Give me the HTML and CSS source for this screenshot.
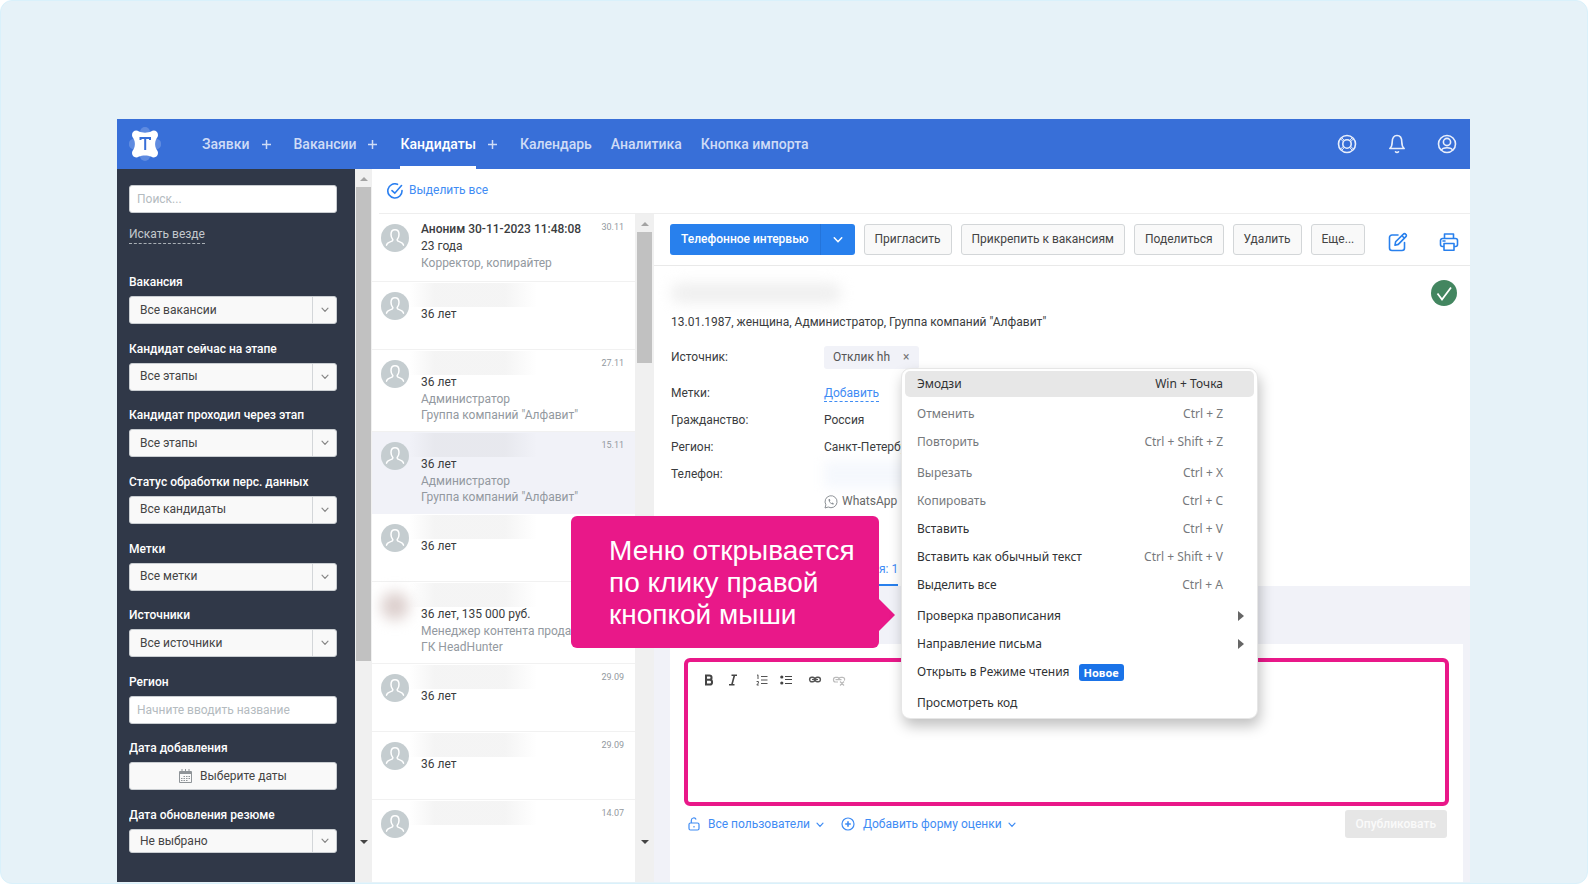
FILE: index.html
```html
<!DOCTYPE html>
<html lang="ru">
<head>
<meta charset="utf-8">
<title>Кандидаты</title>
<link rel="stylesheet" href="styles.css">
</head>
<body>
<svg class="defs" aria-hidden="true">
  <symbol id="avatar" viewBox="0 0 28 28"><circle cx="14" cy="14" r="14" fill="#c5cdd0"/><path d="M5.500 21.200c.3-2 1.800-2.700 3.700-3.300 1.700-.5 2.700-.8 2.700-1.900 0-.8-1.900-2.300-1.900-5.600C10 7.300 11.600 5.700 14 5.700s4 1.600 4 4.700c0 3.300-1.900 4.800-1.900 5.600 0 1.100 1 1.400 2.700 1.900 1.900.6 3.400 1.300 3.700 3.300" fill="none" stroke="#fff" stroke-width="1.500" stroke-linecap="round"/></symbol>
  <symbol id="chevron" viewBox="0 0 8 6"><path d="M1 1.200 4 4.400 7 1.200" fill="none" stroke="currentColor" stroke-width="1.200" stroke-linecap="round"/></symbol>
</svg>
<main class="frame">
  <div class="app">
    <header class="header">
      <a class="logo" href="#" aria-label="Главная"><svg viewBox="0 0 32 34" width="32" height="34"><g fill="#5f8be0"><circle cx="16" cy="5" r="5"/><circle cx="16" cy="29" r="5"/><circle cx="5" cy="17" r="5.200"/><circle cx="27" cy="17" r="5.200"/></g><path d="M3 8c0-4 4-5.500 7-3.500 3 1.500 9 1.500 12 0C25 2.500 29 4 29 8c0 2-1 2.500-2 4.500-1.200 3-1.200 6 0 9 1 2 2 2.500 2 4.500 0 4-4 5.500-7 3.500-3-1.500-9-1.500-12 0C7 31.500 3 30 3 26c0-2 1-2.500 2-4.500 1.200-3 1.200-6 0-9C4 10.500 3 10 3 8z" fill="#fff"/><path d="M11.500 13v-2h9.500v2M16.200 11v12" fill="none" stroke="#386fd8" stroke-width="2"/></svg></a>
      <nav class="nav">
        <span class="nav-item"><a href="#">Заявки</a><button type="button" aria-label="Добавить заявку"><svg viewBox="0 0 9 9" width="9" height="9"><path d="M4.500 0v9M0 4.500h9"/></svg></button></span>
        <span class="nav-item"><a href="#">Вакансии</a><button type="button" aria-label="Добавить вакансию"><svg viewBox="0 0 9 9" width="9" height="9"><path d="M4.500 0v9M0 4.500h9"/></svg></button></span>
        <span class="nav-item active"><a href="#">Кандидаты</a><button type="button" aria-label="Добавить кандидата"><svg viewBox="0 0 9 9" width="9" height="9"><path d="M4.500 0v9M0 4.500h9"/></svg></button></span>
        <span class="nav-item"><a href="#">Календарь</a></span>
        <span class="nav-item"><a href="#">Аналитика</a></span>
        <span class="nav-item"><a href="#">Кнопка импорта</a></span>
      </nav>
      <div class="header-icons">
        <button type="button" aria-label="Помощь"><svg viewBox="0 0 20 20" width="20" height="20"><circle cx="10" cy="10" r="8.500"/><circle cx="10" cy="10" r="4.200"/><path d="M4.500 3.500l3 3.200M3.500 4.800l3 3M15.500 3.500l-3 3.200M16.500 4.800l-3 3M4.500 16.500l3-3.200M3.500 15.200l3-3M15.500 16.500l-3-3.200M16.500 15.200l-3-3" stroke-width="1"/></svg></button>
        <button type="button" aria-label="Уведомления"><svg viewBox="0 0 20 20" width="20" height="20"><path d="M2.800 14.500c1.800-1.500 2.400-3 2.400-6.500 0-4 1.800-6.500 4.800-6.500s4.800 2.500 4.800 6.500c0 3.500.6 5 2.400 6.500zM8.500 17.800c.8.900 2.200.9 3 0"/></svg></button>
        <button type="button" aria-label="Профиль"><svg viewBox="0 0 20 20" width="20" height="20"><circle cx="10" cy="10" r="8.500"/><circle cx="10" cy="8" r="3.600"/><path d="M4.500 16.200c.8-2.200 2.500-2.400 5.500-2.400s4.700.2 5.500 2.400"/></svg></button>
      </div>
    </header>

    <div class="body">
      <aside class="sidebar">
        <input class="text-input" type="text" placeholder="Поиск..." aria-label="Поиск">
        <a class="everywhere" href="#">Искать везде</a>
        <form class="fields">
          <div class="field"><label for="f1">Вакансия</label><div class="select"><select id="f1"><option>Все вакансии</option></select><span class="caret"><svg width="8" height="6"><use href="#chevron"/></svg></span></div></div>
          <div class="field"><label for="f2">Кандидат сейчас на этапе</label><div class="select"><select id="f2"><option>Все этапы</option></select><span class="caret"><svg width="8" height="6"><use href="#chevron"/></svg></span></div></div>
          <div class="field"><label for="f3">Кандидат проходил через этап</label><div class="select"><select id="f3"><option>Все этапы</option></select><span class="caret"><svg width="8" height="6"><use href="#chevron"/></svg></span></div></div>
          <div class="field"><label for="f4">Статус обработки перс. данных</label><div class="select"><select id="f4"><option>Все кандидаты</option></select><span class="caret"><svg width="8" height="6"><use href="#chevron"/></svg></span></div></div>
          <div class="field"><label for="f5">Метки</label><div class="select"><select id="f5"><option>Все метки</option></select><span class="caret"><svg width="8" height="6"><use href="#chevron"/></svg></span></div></div>
          <div class="field"><label for="f6">Источники</label><div class="select"><select id="f6"><option>Все источники</option></select><span class="caret"><svg width="8" height="6"><use href="#chevron"/></svg></span></div></div>
          <div class="field"><label for="f7">Регион</label><input class="text-input" id="f7" type="text" placeholder="Начните вводить название"></div>
          <div class="field"><label for="f8">Дата добавления</label><button class="date-btn" id="f8" type="button"><svg viewBox="0 0 13 14" width="13" height="14"><path d="M.5 2.500h12v11H.5zM3 0v3.500M6.500 0v3.500M10 0v3.500" fill="none" stroke="#8f9498"/><path d="M.5 3h12v2H.5z" fill="#8f9498"/><path d="M4.500 7.500h7M2 9.500h9.500M2 11.500h7" stroke="#8f9498" stroke-width="1.200" stroke-dasharray="1.500 1"/></svg>Выберите даты</button></div>
          <div class="field"><label for="f9">Дата обновления резюме</label><div class="select"><select id="f9"><option>Не выбрано</option></select><span class="caret"><svg width="8" height="6"><use href="#chevron"/></svg></span></div></div>
        </form>
      </aside>
      <div class="scroll scroll-side"><i class="up"></i><i class="thumb"></i><i class="down"></i></div>

      <div class="workspace">
        <div class="select-all"><a href="#"><svg viewBox="0 0 16 16" width="16" height="16"><path d="M10.500 1.300A7.100 7.100 0 1 0 15 7.500M5 7.600l2.800 2.600L14.500 2.500" fill="none" stroke="#2a7ff0" stroke-width="1.600" stroke-linecap="round"/></svg>Выделить все</a></div>
        <div class="columns">
          <ul class="list">
            <li><svg class="ava" width="28" height="28"><use href="#avatar"/></svg><div class="person"><b>Аноним 30-11-2023 11:48:08</b><span>23 года</span><small>Корректор, копирайтер</small></div><time>30.11</time></li>
            <li><svg class="ava" width="28" height="28"><use href="#avatar"/></svg><div class="person"><i class="veil"></i><span>36 лет</span></div></li>
            <li><svg class="ava" width="28" height="28"><use href="#avatar"/></svg><div class="person"><i class="veil"></i><span>36 лет</span><small>Администратор</small><small>Группа компаний "Алфавит"</small></div><time>27.11</time></li>
            <li class="current"><svg class="ava" width="28" height="28"><use href="#avatar"/></svg><div class="person"><i class="veil"></i><span>36 лет</span><small>Администратор</small><small>Группа компаний "Алфавит"</small></div><time>15.11</time></li>
            <li><svg class="ava" width="28" height="28"><use href="#avatar"/></svg><div class="person"><i class="veil"></i><span>36 лет</span></div></li>
            <li><div class="ava photo"></div><div class="person"><i class="veil"></i><span>36 лет, 135 000 руб.</span><small>Менеджер контента продаж</small><small>ГК HeadHunter</small></div></li>
            <li><svg class="ava" width="28" height="28"><use href="#avatar"/></svg><div class="person"><i class="veil"></i><span>36 лет</span></div><time>29.09</time></li>
            <li><svg class="ava" width="28" height="28"><use href="#avatar"/></svg><div class="person"><i class="veil"></i><span>36 лет</span></div><time>29.09</time></li>
            <li><svg class="ava" width="28" height="28"><use href="#avatar"/></svg><div class="person"><i class="veil"></i></div><time>14.07</time></li>
          </ul>
          <div class="scroll scroll-list"><i class="up"></i><i class="thumb"></i><i class="down"></i></div>

          <section class="details">
            <div class="toolbar">
              <div class="split"><button type="button">Телефонное интервью</button><button type="button" aria-label="Другие этапы"><svg width="10" height="8"><use href="#chevron"/></svg></button></div>
              <button class="btn" type="button">Пригласить</button>
              <button class="btn" type="button">Прикрепить к вакансиям</button>
              <button class="btn" type="button">Поделиться</button>
              <button class="btn" type="button">Удалить</button>
              <button class="btn" type="button">Еще...</button>
              <div class="tools">
                <button type="button" aria-label="Редактировать"><svg viewBox="0 0 20 20" width="20" height="20"><path d="M10 3H4a2.500 2.500 0 0 0-2.500 2.500V16A2.500 2.500 0 0 0 4 18.500h10a2.500 2.500 0 0 0 2.500-2.500v-5.500M7 13.200l.6-3.400 7.800-7.700a1.500 1.500 0 0 1 2.200 0l.3.300a1.500 1.500 0 0 1 0 2.200l-7.600 7.800zM14 3.800l2.500 2.500"/></svg></button>
                <button type="button" aria-label="Печать"><svg viewBox="0 0 20 20" width="20" height="20"><path d="M5.500 6.500V2h9v4.500M5 14.500H3.500A2 2 0 0 1 1.500 12.500v-4a2 2 0 0 1 2-2h13a2 2 0 0 1 2 2v4a2 2 0 0 1-2 2H15M5 11.500h10v6.700H5zM4 9h2"/></svg></button>
              </div>
            </div>
            <div class="profile">
              <div class="profile-name"><i class="name-veil"></i><svg viewBox="0 0 26 26" width="26" height="26"><circle cx="13" cy="13" r="13" fill="#438660"/><path d="M6.500 13.500 11 19.500 20 7.500" fill="none" stroke="#fff" stroke-width="1.800"/></svg></div>
              <p class="summary">13.01.1987, женщина, Администратор, Группа компаний "Алфавит"</p>
              <dl class="facts">
                <dt class="source">Источник:</dt><dd class="source"><span class="chip">Отклик hh<button type="button" aria-label="Убрать источник">×</button></span></dd>
                <dt>Метки:</dt><dd><a class="dashed" href="#">Добавить</a></dd>
                <dt>Гражданство:</dt><dd>Россия</dd>
                <dt>Регион:</dt><dd>Санкт-Петербург</dd>
                <dt>Телефон:</dt><dd><i class="phone-veil"></i></dd>
                <dd class="wa"><svg viewBox="0 0 14 14" width="14" height="14"><path d="M1 13l.9-3.200A6 6 0 1 1 4.200 12z" fill="none" stroke="#8a8f94"/><path d="M4.800 4c-1.300 2 2.700 6.400 5 5.200l-.2-1-1.400-.6-.7.600C6.400 7.700 6 7 5.800 6.300l.6-.7L5.800 4z" fill="#8a8f94"/></svg>WhatsApp</dd>
              </dl>
              <nav class="tabs"><a href="#">я: 1</a></nav>
            </div>
            <div class="comments">
              <div class="composer">
                <div class="editor">
                  <div class="format">
                    <button type="button" aria-label="Полужирный"><svg viewBox="0 0 10 12" width="10" height="12"><path d="M2 1.500h3.300c3 0 3 4.300 0 4.300H2zM2 5.800h3.800c3 0 3 4.700 0 4.700H2zM2 1v10" fill="none" stroke="#444" stroke-width="2"/></svg></button>
                    <button type="button" aria-label="Курсив"><svg viewBox="0 0 10 12" width="10" height="12"><path d="M3.500 1.200H9M1 10.800h5.500M6.500 1 3.800 11" fill="none" stroke="#444" stroke-width="1.600"/></svg></button>
                    <button class="gap" type="button" aria-label="Нумерованный список"><svg viewBox="0 0 12 12" width="12" height="12"><path d="M5 2.500h6.500M5 6h6.500M5 9.500h6.500M1 1.500l1-.7V5M.6 7.500h1.800V9L.8 11h2" fill="none" stroke="#555"/></svg></button>
                    <button type="button" aria-label="Маркированный список"><svg viewBox="0 0 12 12" width="12" height="12"><path d="M5 2.500h7M5 5.500h7M5 9.500h7" fill="none" stroke="#444"/><circle cx="1.800" cy="3" r="1.600" fill="#444"/><circle cx="1.800" cy="9" r="1.600" fill="#444"/></svg></button>
                    <button class="gap" type="button" aria-label="Ссылка"><svg viewBox="0 0 14 12" width="14" height="12"><rect x="1.600" y="3.200" width="5.200" height="4.600" rx="2.200" fill="none" stroke="#555" stroke-width="1.400"/><rect x="7.200" y="3.200" width="5.200" height="4.600" rx="2.200" fill="none" stroke="#555" stroke-width="1.400"/><path d="M4 5.500h6" stroke="#555" stroke-width="1.200"/></svg></button>
                    <button type="button" aria-label="Убрать ссылку" disabled><svg viewBox="0 0 14 12" width="14" height="12"><path d="M6 8H3.500C.8 8 .8 3.400 3.500 3.400h2C7 3.400 7 5 7 5.600M7 5c0-1 .8-1.600 2-1.600h1.500C13 3.400 13 6 12 6.500M3.500 5.700h6M8 7.500l4 4M12 7.500l-4 4" fill="none" stroke="#bbb" stroke-width="1.200"/></svg></button>
                  </div>
                  <textarea aria-label="Комментарий"></textarea>
                </div>
                <div class="composer-foot">
                  <button class="link" type="button"><svg viewBox="0 0 12 14" width="12" height="14"><rect x="1" y="6" width="10" height="7" rx="1.500"/><path d="M3.300 6V3.500a2.500 2.500 0 0 1 4.800-1M6 9v1.500"/></svg>Все пользователи<svg class="mini" width="8" height="6"><use href="#chevron"/></svg></button>
                  <button class="link" type="button"><svg viewBox="0 0 14 14" width="14" height="14"><circle cx="7" cy="7" r="6"/><path d="M7 4.200v5.600M4.200 7h5.600" stroke-width="1.600"/></svg>Добавить форму оценки<svg class="mini" width="8" height="6"><use href="#chevron"/></svg></button>
                  <button class="publish" type="button" disabled>Опубликовать</button>
                </div>
              </div>
            </div>
          </section>
        </div>
      </div>
    </div>
  </div>

  <div class="callout">Меню открывается<br>по клику правой<br>кнопкой мыши</div>

  <div class="menu" role="menu">
    <button class="hover" type="button" role="menuitem">Эмодзи<kbd>Win + Точка</kbd></button>
    <div class="group">
      <button type="button" role="menuitem" disabled>Отменить<kbd>Ctrl + Z</kbd></button>
      <button type="button" role="menuitem" disabled>Повторить<kbd>Ctrl + Shift + Z</kbd></button>
    </div>
    <div class="group">
      <button type="button" role="menuitem" disabled>Вырезать<kbd>Ctrl + X</kbd></button>
      <button type="button" role="menuitem" disabled>Копировать<kbd>Ctrl + C</kbd></button>
      <button type="button" role="menuitem">Вставить<kbd>Ctrl + V</kbd></button>
      <button type="button" role="menuitem">Вставить как обычный текст<kbd>Ctrl + Shift + V</kbd></button>
      <button type="button" role="menuitem">Выделить все<kbd>Ctrl + A</kbd></button>
    </div>
    <div class="group">
      <button class="sub" type="button" role="menuitem">Проверка правописания</button>
      <button class="sub" type="button" role="menuitem">Направление письма</button>
      <button type="button" role="menuitem">Открыть в Режиме чтения<em>Новое</em></button>
    </div>
    <div class="group">
      <button type="button" role="menuitem">Просмотреть код</button>
    </div>
  </div>
</main>
</body>
</html>
```
FILE: styles.css
```css
* { box-sizing: border-box; }

body {
  margin: 0;
  height: 100vh;
  padding: 0 1px 1px 0;
  background: #fff;
  color: #3a3c3e;
  font: 12px/17px Roboto, sans-serif;
  overflow: hidden;
}

button, input, select, textarea { font: inherit; color: inherit; margin: 0; }
button { border: 0; padding: 0; background: none; cursor: pointer; white-space: nowrap; }
a { color: inherit; text-decoration: none; }
svg { flex: none; display: block; }
.defs { position: absolute; width: 0; height: 0; }

.frame {
  position: relative;
  height: 100%;
  padding: 118px 117px 1px 116px;
  border: 1px solid #d9f1fb;
  border-radius: 12px;
  background: #e6f2f8;
}

.app { display: flex; flex-direction: column; height: 100%; background: #fff; }

/* Header */
.header { display: flex; align-items: stretch; height: 50px; padding: 0 13px 0 12px; background: #386fd8; }
.logo { display: flex; align-items: center; width: 73px; }
.nav { display: flex; flex: 1; gap: 19px; font-size: 14px; font-weight: 500; color: #cfdcf6; }
.nav-item { display: flex; gap: 12px; }
.nav-item:nth-child(-n+3) { padding-right: 4px; }
.nav-item a { display: flex; align-items: center; border-bottom: 3px solid transparent; border-top: 3px solid transparent; }
.nav-item.active a { color: #fff; border-bottom-color: #fff; }
.nav-item path { stroke: #cfdcf6; stroke-width: 1.500; }
.header-icons { display: flex; align-items: center; gap: 30px; }
.header-icons svg { fill: none; stroke: #e9effb; stroke-width: 1.600; stroke-linejoin: round; stroke-linecap: round; }

/* Layout */
.body { display: flex; flex: 1; min-height: 0; }
.workspace { display: flex; flex-direction: column; flex: 1; min-width: 0; }
.columns { display: flex; flex: 1; min-height: 0; }

/* Sidebar */
.sidebar { display: flex; flex-direction: column; align-items: stretch; width: 238px; padding: 16px 18px 29px 12px; background: #303848; color: #fff; }
.text-input { display: block; width: 100%; height: 28px; padding: 0 7px; border: 1px solid #c9cdd1; border-radius: 3px; background: #fff; color: #303234; }
.text-input::placeholder { color: #b4bbc0; opacity: 1; }
.everywhere { align-self: flex-start; margin: 13px 0 30px; color: #c3c8cd; border-bottom: 1px dashed #aab0b6; }
.fields { display: flex; flex: 1; flex-direction: column; justify-content: space-between; min-height: 0; overflow: hidden; }
.field { display: flex; flex-direction: column; gap: 5px; }
.field:last-child { height: 46px; overflow: hidden; }
.field label { font-weight: 500; }
.select { display: grid; height: 28px; border: 1px solid #c9cdd1; border-radius: 3px; background: #f9f9f9; color: #444; overflow: hidden; }
.select select { grid-area: 1 / 1; width: 100%; padding: 0 34px 0 10px; border: 0; background: none; appearance: none; }
.caret { grid-area: 1 / 1; justify-self: end; display: flex; align-items: center; justify-content: center; width: 24px; border-left: 1px solid #d3d6d9; color: #888; pointer-events: none; }
.field:last-child .select { height: 24px; }
.date-btn { display: flex; align-items: center; justify-content: center; gap: 8px; height: 28px; border: 1px solid #c9cdd1; border-radius: 3px; background: #f9f9f9; color: #444; }

/* Scrollbars */
.scroll { display: flex; flex-direction: column; flex: none; align-items: center; padding: 8px 1px 38px; background: #f0f0f0; }
.scroll-side { width: 17px; }
.scroll-list { width: 19px; }
.scroll .up { border: 4px solid transparent; border-top: 0; border-bottom-color: #a3a3a3; }
.scroll .down { margin-top: auto; border: 4px solid transparent; border-bottom: 0; border-top-color: #444; }
.scroll .thumb { width: 100%; margin-top: 6px; background: #c1c1c1; }
.scroll-side .thumb { height: 71%; }
.scroll-list .thumb { height: 21%; max-width: 15px; }

/* Bulk selection strip */
.select-all { display: flex; height: 45px; margin-left: 7px; padding: 0 0 1px 8px; border-bottom: 1px solid #eee; }
.select-all a { display: flex; align-items: center; gap: 6px; color: #3f8cf4; }

/* Candidate list */
.list { width: 263px; margin: 0; padding: 0; list-style: none; overflow: hidden; }
.list li { display: flex; gap: 12px; min-height: 68px; padding: 7px 11px 8px 9px; border-bottom: 1px solid #f1f1f1; }
.list li:last-child { border: 0; }
.list .current { background: #f1f2f8; border-color: #f1f2f8; }
.ava { flex: none; margin-top: 3px; }
.photo { width: 28px; height: 28px; border-radius: 50%; background: #dccfcd; filter: blur(7px); }
.person { display: flex; flex: 1; flex-direction: column; min-width: 0; white-space: nowrap; }
.person b { font-weight: 500; }
.person small { font-size: 12px; line-height: 16px; color: #9399a0; }
.list time { font-size: 9px; line-height: 13px; color: #9399a0; }
.veil { height: 24px; width: 128px; margin: -6px 0 -1px -12px; background: linear-gradient(90deg, rgba(120,120,120,0), rgba(120,120,120,.08) 20%, rgba(120,120,120,.08) 75%, rgba(120,120,120,0)); }

/* Candidate details */
.details { display: flex; flex: 1; flex-direction: column; min-width: 0; }
.toolbar { display: flex; align-items: center; gap: 9px; height: 52px; padding: 0 11px 0 16px; border-bottom: 1px solid #e9e9e9; }
.split { display: flex; height: 31px; border-radius: 3px; background: #2880ed; color: #fff; }
.split button { padding: 0 11px; font-weight: 500; }
.split button:last-child { display: flex; align-items: center; justify-content: center; width: 35px; border-left: 1px solid #2474da; }
.btn { height: 31px; padding: 0 10px; border: 1px solid #d3d6d8; border-radius: 3px; background: #f9f9f9; color: #444; }
.tools { display: flex; gap: 31px; margin: 4px 0 0 auto; }
.tools svg { fill: none; stroke: #2880ed; stroke-width: 1.600; stroke-linejoin: round; stroke-linecap: round; }

.profile { padding: 10px 13px 0 17px; }
.profile-name { display: flex; justify-content: space-between; align-items: center; height: 34px; }
.name-veil { width: 170px; height: 20px; border-radius: 9px; background: #efefef; filter: blur(7px); }
.summary { margin: 4px 0 14px; }
.facts { display: grid; grid-template-columns: 153px 1fr; margin: 0; line-height: 27px; }
.facts dd { margin: 0; }
.facts .source { height: 25px; margin-bottom: 10px; line-height: 25px; }
.chip { display: flex; align-items: center; gap: 13px; width: max-content; height: 23px; margin-top: 1px; padding: 0 10px 0 9px; border-radius: 3px; background: #f1f2f8; color: #555; }
.chip button { color: #777; }
.dashed { padding-bottom: 1px; color: #3f8cf4; border-bottom: 1px dashed #3f8cf4; }
.facts .phone-veil { display: block; width: 100px; height: 27px; background: #f5f8fd; filter: blur(6px); }
.facts .wa { grid-column: 2; display: flex; align-items: center; gap: 4px; color: #666; }
.tabs { display: flex; height: 35px; margin-top: 36px; }
.tabs a { padding: 10px 0 0 208px; color: #3f8cf4; border-bottom: 2px solid #2880ed; }

.comments { display: flex; flex: 1; padding: 58px 7px 0 16px; background: #f1f2f8; }
.composer { flex: 1; padding: 14px 14px 0; background: #fff; }
.editor { display: flex; flex-direction: column; height: 148px; border: 4px solid #e91889; border-radius: 6px; background: #fff; }
.format { display: flex; align-items: center; gap: 12px; height: 36px; padding-left: 15px; }
.format button { display: flex; justify-content: center; width: 12px; }
.format .gap { margin-left: 5px; }
.editor textarea { flex: 1; border: 0; resize: none; outline: 0; background: none; }
.composer-foot { display: flex; align-items: center; gap: 17px; padding: 4px 2px 0 4px; }
.link { display: flex; align-items: center; gap: 8px; color: #3f8cf4; }
.link svg:not(.mini) { fill: none; stroke: #3f8cf4; stroke-width: 1.200; }
.link .mini { margin: 2px 0 0 -2px; }
.publish { height: 28px; margin-left: auto; padding: 0 11px; border-radius: 3px; background: #e6e6e6; color: #fafafa; font-weight: 500; }

/* Callout */
.callout { position: absolute; left: 570px; top: 515px; width: 308px; padding: 19px 0 17px 38px; border-radius: 6px; background: #e91889; color: #fff; font: 28px/32px "Liberation Sans", Arial, sans-serif; white-space: nowrap; }
.callout::after { content: ""; position: absolute; left: 100%; top: 83px; border: 16px solid transparent; border-right: 0; border-left-color: #e91889; }

/* Context menu */
.menu { position: absolute; left: 900px; top: 367px; width: 357px; padding: 1px 3px; border: 1px solid #e6e6e6; border-radius: 9px; background: #fff; box-shadow: 2px 7px 14px rgba(0,0,0,.25); color: #303234; font: 12px/28px "Noto Sans", "Open Sans", sans-serif; }
.menu button { display: flex; align-items: center; width: 100%; height: 28px; padding: 0 31px 0 12px; border-radius: 5px; color: #303234; text-align: left; }
.menu .hover { height: 26px; margin: 1px 0 2px; background: #e7e7e7; }
.menu .group { margin-top: 3px; }
.menu kbd { margin-left: auto; font: inherit; color: #76797c; }
.menu .hover kbd { color: #303234; }
.menu button:disabled { color: #76797c; }
.menu .sub { padding-right: 10px; }
.menu .sub::after { content: ""; margin-left: auto; border: 5px solid transparent; border-right: 0; border-left: 6px solid #666; }
.menu em { margin-left: 9px; padding: 0 5px; border-radius: 3px; background: #1a73e8; color: #fff; font-size: 11px; font-style: normal; font-weight: 700; line-height: 17px; }
```
